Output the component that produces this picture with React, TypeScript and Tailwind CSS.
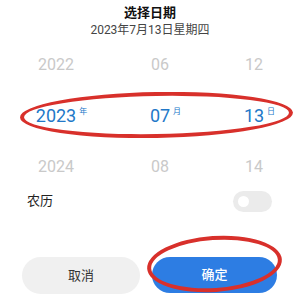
import React from 'react';

const rows = [
  { y: '2022', m: '06', d: '12', active: false },
  { y: '2023', m: '07', d: '13', active: true },
  { y: '2024', m: '08', d: '14', active: false },
];

const Cell: React.FC<{ value: string; unit: string; active: boolean }> = ({ value, unit, active }) => (
  <div className="flex items-center justify-center">
    {active ? (
      <span className="relative text-[18px] leading-none text-[#2278c8]">
        {value}
        <span className="absolute left-full top-[1px] ml-[3px] text-[8px] leading-none whitespace-nowrap">{unit}</span>
      </span>
    ) : (
      <span className="text-[16px] leading-none text-[#c9c9c9]">{value}</span>
    )}
  </div>
);

const App: React.FC = () => {
  return (
    <div
      className="relative w-[300px] h-[300px] overflow-hidden bg-white"
      style={{ fontFamily: 'Roboto, "Noto Sans CJK SC", sans-serif' }}
    >
      <div className="pt-[4px] text-center">
        <div className="text-[13px] leading-[18px] font-bold text-[#111]">选择日期</div>
        <div className="text-[12px] leading-[16px] text-[#444]">2023年7月13日星期四</div>
      </div>

      <div className="mt-[3px]">
        {rows.map((r) => (
          <div
            key={r.y}
            className={`grid grid-cols-[112px_96px_92px] ${r.active ? 'h-[54px]' : 'h-[48px]'}`}
          >
            <Cell value={r.y} unit="年" active={r.active} />
            <Cell value={r.m} unit="月" active={r.active} />
            <Cell value={r.d} unit="日" active={r.active} />
          </div>
        ))}
      </div>

      <div className="flex items-center justify-between h-[20px] pl-[27px] pr-[28px]">
        <span className="text-[13px] text-[#222]">农历</span>
        <div className="flex items-center w-[39px] h-[21px] rounded-full bg-[#ebebeb] pl-[5px]">
          <div className="w-[11px] h-[11px] rounded-full bg-white" />
        </div>
      </div>

      <div className="flex gap-[12px] pl-[22px] pr-[23px] mt-[46px]">
        <button className="w-[118px] h-[37px] rounded-full bg-[#f0f0f0] text-[13px] text-[#333]">取消</button>
        <button className="flex-1 h-[36px] rounded-full bg-[#2d7de3] text-[13px] font-medium text-white">确定</button>
      </div>

      {/* red annotation marks */}
      <div className="absolute left-[20px] top-[92px] w-[273px] h-[46px] rounded-[50%] border-[4px] border-[#d8302b] -rotate-[1deg]" />
      <div className="absolute left-[147px] top-[236px] w-[135px] h-[56px] rounded-[50%] border-[4px] border-[#d8302b] -rotate-[4deg]" />
    </div>
  );
};

export default App;
